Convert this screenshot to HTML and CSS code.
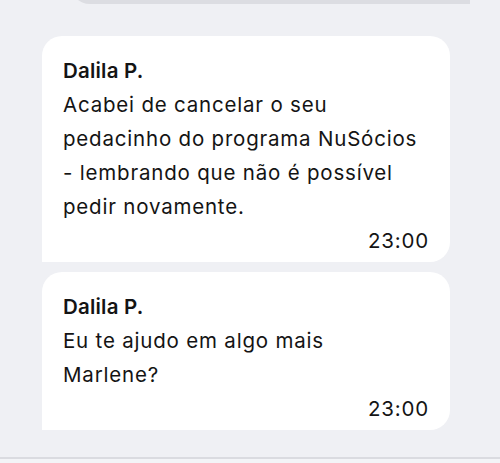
FILE: index.html
```html
<!doctype html>
<html>
  <head>
    <title>Chat</title>
    <meta name="viewport" content="width=device-width,initial-scale=1.0"/>
    <meta charset="utf-8"/>
    <link rel="stylesheet" href="styles.css">
  </head>
  <body>
    <div class="chat">
      <div class="mine"></div>
      <div class="msg">
        <div class="who">Dalila P.</div>
        <div class="txt">Acabei de cancelar o seu pedacinho do programa NuSócios - lembrando que não é possível pedir novamente.</div>
        <div class="time">23:00</div>
      </div>
      <div class="msg">
        <div class="who">Dalila P.</div>
        <div class="txt">Eu te ajudo em algo mais Marlene?</div>
        <div class="time">23:00</div>
      </div>
    </div>
    <div class="foot"></div>
  </body>
</html>
```

FILE: styles.css
```css
*{
  font-family:Inter,"Noto Sans",sans-serif;
  box-sizing:border-box;
}
html,body{
  margin:0;
  padding:0;
  height:100%;
  overflow:hidden;
}
body{
  background:#eff0f4;
  color:#141414;
  display:flex;
  flex-direction:column;
}
.chat{
  flex:1;
  display:flex;
  flex-direction:column;
  gap:10px;
}
.mine{
  margin:-36px 30px 22px 70px;
  height:40px;
  background:#dcdde2;
  border-radius:20px 20px 0 20px;
}
.msg{
  margin:0 50px 0 42px;
  background:#fff;
  border-radius:20px 20px 20px 0;
  padding:18px 22px 4px 21px;
  font-size:20.5px;
  line-height:34px;
  letter-spacing:0.8px;
}
.who{
  font-weight:600;
  letter-spacing:0.2px;
}
.txt{
  max-width:358px;
}
.time{
  text-align:right;
  margin-right:-1px;
}
.foot{
  height:6px;
  border-top:2px solid #dadbe0;
  background:#f3f4f7;
}
```
